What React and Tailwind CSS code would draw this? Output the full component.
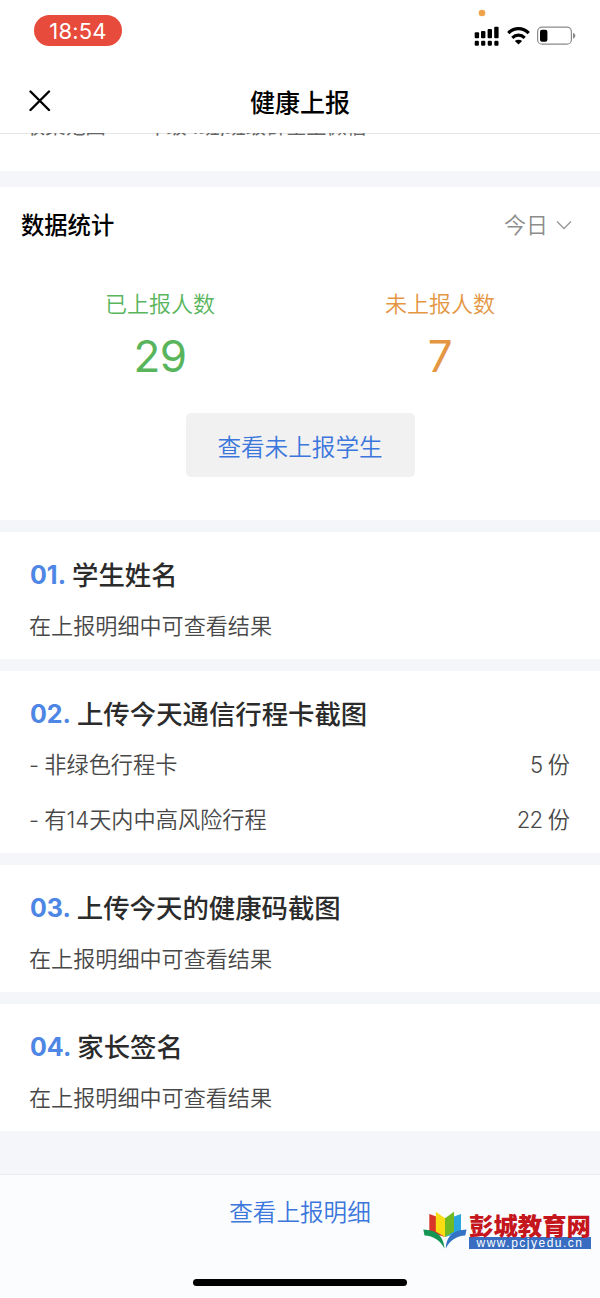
const ROOT_FONT = "font-['Inter','Noto_Sans_CJK_SC',sans-serif]";

function StatusBar() {
  return (
    <div className="flex h-[70px] shrink-0 justify-between pl-[34px] pr-[24px]">
      <div className="mt-[15px] flex h-[31px] w-[88px] items-center justify-center rounded-full bg-[#e64b3c] text-[22px] leading-none tracking-[0.2px] text-white">
        18:54
      </div>
      <svg className="mt-[8px] h-[40px] w-[104px]" viewBox="472 8 104 40">
        <circle cx="482" cy="13" r="3.3" fill="#f0a44a" />
        <g fill="#000">
          <rect x="474.7" y="32.3" width="4.4" height="6" rx="1" />
          <rect x="481" y="31" width="4.4" height="7.3" rx="1" />
          <rect x="487.6" y="29" width="4.4" height="9.3" rx="1" />
          <rect x="494.2" y="26.7" width="4.4" height="11.6" rx="1" />
          <rect x="474.7" y="40.8" width="4.2" height="5" rx="1.2" />
          <rect x="481.1" y="40.8" width="4.2" height="5" rx="1.2" />
          <rect x="487.7" y="40.8" width="4.2" height="5" rx="1.2" />
          <rect x="494.3" y="40.8" width="4.2" height="5" rx="1.2" />
          <path d="M514.8 41q3.700-2.600 7.400 0l-3.700 3.500z" />
        </g>
        <g fill="none" stroke="#000" strokeWidth="3.200">
          <path d="M508.300 33.100c5.800-6 14.600-6 20.400 0" />
          <path d="M512.300 37.800c3.600-3.500 8.800-3.500 12.400 0" />
        </g>
        <rect x="537.6" y="27.2" width="33.8" height="17" rx="4.5" fill="none" stroke="#8a8a8a" strokeWidth="1.2" />
        <rect x="540" y="29.8" width="7.4" height="12" rx="2" fill="#000" />
        <path d="M573 32.8q2.4 1 2.4 3t-2.4 3z" fill="#8a8a8a" />
      </svg>
    </div>
  );
}

function Header() {
  return (
    <header className="grid h-[64px] shrink-0 grid-cols-[1fr_auto_1fr] items-center border-b border-[#e6e6e6] px-[29px]">
      <svg className="-mt-px size-[22px]" viewBox="0 0 22 22" fill="none" stroke="#000" strokeWidth="2.4" strokeLinecap="round">
        <path d="M1.5 1.5l18.5 18.5M20 1.5L1.5 20" />
      </svg>
      <h1 className="mt-[3px] text-[25px] leading-none font-medium text-black">健康上报</h1>
    </header>
  );
}

function Stat({ label, value, className }) {
  return (
    <div className={`flex w-[280px] flex-col items-center ${className}`}>
      <span className="text-[22px] leading-[32px] font-[350]">{label}</span>
      <span className="mt-[10px] text-[44px] leading-[52px] tracking-[-0.5px]">{value}</span>
    </div>
  );
}

function Question({ number, title, children, className }) {
  return (
    <section className={`shrink-0 bg-white pt-[24px] pr-[30px] pl-[29px] ${className}`}>
      <h2 className="flex items-center text-[26.4px] leading-[38px] font-medium text-[#2b2b2b]">
        <span className="mr-[6px] ml-px text-[25px] font-bold text-[#4d86e4]">{number}.</span>
        {title}
      </h2>
      {children}
    </section>
  );
}

function Note() {
  return <p className="mt-[16px] text-[22.1px] leading-[32px] font-[350] text-[#484848]">在上报明细中可查看结果</p>;
}

function Row({ label, count, className }) {
  return (
    <div className={`flex justify-between text-[22.200px] leading-[32px] font-[350] text-[#484848] ${className}`}>
      <span>
        <span className="tracking-[-0.5px]">- </span>
        {label}
      </span>
      <span>
        <span className="tracking-[-0.8px]">{count} </span>份
      </span>
    </div>
  );
}

function SiteLogo() {
  return (
    <div className="absolute top-[35px] left-[423px] flex items-start">
      <svg className="h-[39px] w-[44px]" viewBox="0 0 44 39">
        <path d="M6.300 4l7 2.500L22 27l-15.700-5z" fill="#d8342a" />
        <path d="M38 4l-7 2.500L22 27l16-5z" fill="#2ba7df" />
        <path d="M12.800 1.800L22 8.300V27l-9.200-5.500z" fill="#f9dd12" />
        <path d="M31 1.800L22 8.300V27l9-5.500z" fill="#6fba22" />
        <path d="M0.300 19.500C12 20 20.500 24.500 21.500 38.500C17.500 30.500 10.500 26 1.500 25.500z" fill="#159552" />
        <path d="M43.500 19.500C32 20 23.500 24.500 22.800 38.500C26.500 30.500 33.500 26 42.300 25.500z" fill="#3472c4" />
      </svg>
      <div className="mt-[5px] ml-[2px] w-[122px]">
        <div className="text-[24.400px] leading-[22px] font-black whitespace-nowrap text-[#c4161c]">彭城教育网</div>
        <div className="flex h-[12px] items-center justify-center bg-[#386dc1] font-['Liberation_Sans',sans-serif] text-[12px] leading-none tracking-[1.500px] text-white">
          www.pcjyedu.cn
        </div>
      </div>
    </div>
  );
}

export default function App() {
  return (
    <div className={`flex h-[1298px] w-[600px] flex-col overflow-hidden bg-[#f5f6fa] ${ROOT_FONT}`}>
      <div className="flex shrink-0 flex-col bg-white">
        <StatusBar />
        <Header />
      </div>

      <div className="flex h-[37px] shrink-0 items-start bg-white px-[25px]">
        <div className="-mt-px flex h-[3px] items-end overflow-hidden text-[20.200px] leading-[26px] whitespace-nowrap text-[#666]">
          <span className="-mb-[4px] w-[101px]">收集范围</span>
          <span className="-mb-[4px]">一年级4班,班级群全主微信</span>
        </div>
      </div>

      <section className="mt-[16px] flex h-[333px] shrink-0 flex-col bg-white">
        <div className="flex items-center justify-between pt-[22px] pr-[28px] pl-[21px]">
          <h2 className="text-[23.300px] leading-[34px] font-medium text-black">数据统计</h2>
          <button className="-mt-[2px] flex items-center text-[22px] leading-[34px] font-[350] text-[#8c8c8c]">
            今日
            <svg className="ml-[8px] h-[10px] w-[16px]" viewBox="0 0 16 10" fill="none" stroke="#999" strokeWidth="1.4">
              <path d="M1 1.500l7 7 7-7" />
            </svg>
          </button>
        </div>
        <div className="mt-[45px] flex justify-center">
          <Stat label="已上报人数" value="29" className="text-[#58b55c]" />
          <Stat label="未上报人数" value="7" className="text-[#e49643]" />
        </div>
        <button className="mt-[31px] h-[64px] w-[229px] self-center rounded-[5px] bg-[#f1f1f1] pt-[5px] text-[23.600px] font-[350] text-[#3a76dc]">
          查看未上报学生
        </button>
      </section>

      <Question number="01" title="学生姓名" className="mt-[12px] h-[127px]">
        <Note />
      </Question>
      <Question number="02" title="上传今天通信行程卡截图" className="mt-[12px] h-[182px]">
        <Row label="非绿色行程卡" count="5" className="mt-[16px]" />
        <Row label="有14天内中高风险行程" count="22" className="mt-[23px]" />
      </Question>
      <Question number="03" title="上传今天的健康码截图" className="mt-[12px] h-[127px]">
        <Note />
      </Question>
      <Question number="04" title="家长签名" className="mt-[12px] h-[127px]">
        <Note />
      </Question>

      <footer className="relative mt-[43px] flex h-[124px] shrink-0 flex-col items-center border-t border-[#ececf0] bg-[#fbfcfe]">
        <button className="mt-[21px] text-[23.600px] leading-[34px] font-[350] text-[#3a76dc]">查看上报明细</button>
        <div className="mt-[49px] h-[7px] w-[214px] rounded-full bg-black" />
        <SiteLogo />
      </footer>
    </div>
  );
}
